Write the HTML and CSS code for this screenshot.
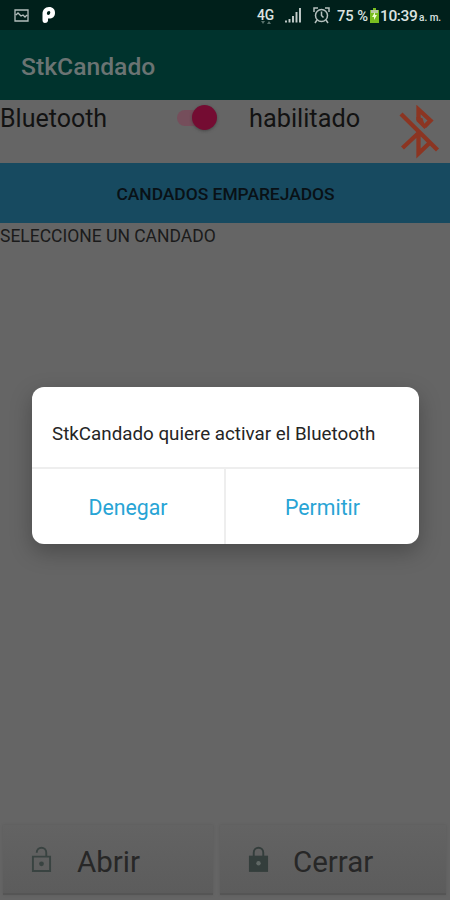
FILE: index.html
```html
<!DOCTYPE html>
<html lang="es">
<head>
<meta charset="utf-8">
<title>StkCandado</title>
<link rel="stylesheet" href="styles.css">
</head>
<body>
<div class="screen">
  <header class="status">
    <svg class="photo" viewBox="0 0 15 13"><path d="M1 1h13v11H1zM2 6l2-2 3 3 2-1 2 2 2-2" fill="none" stroke="#b4bfbd" stroke-width="1.300"/></svg>
    <svg class="app" viewBox="0 0 14 17"><path fill-rule="evenodd" d="M7 0C11 0 13 2.500 13 6C13 10 10 12 6 11.500V14Q5.500 16 3 16Q.5 16 .5 13V7C.5 3 3 0 7 0ZM7 4C5 4 4 7 6 8C8 8.500 9.500 4 7 4Z" fill="#fff"/></svg>
    <div class="network"><span>4G</span><svg viewBox="0 0 10 4"><path d="M0 0h4L2 3zM6 3l2-3 2 3z" fill="#58716b"/></svg></div>
    <svg class="signal" viewBox="0 0 17 15"><path d="M1 12.500v2M4.500 11v3.500M8 8v6.500M11.500 4v10.500M15 0v14.500" stroke="#c5cecc" stroke-width="1.900"/></svg>
    <svg class="alarm" viewBox="0 0 17 17"><g fill="none" stroke="#b5c0be" stroke-width="1.500"><circle cx="8.500" cy="8.500" r="6"/><path d="M8.500 4.500v4l2 2M1 5V1h4M12 1h4v4M4 13l-2 3M13 13l2 3"/></g></svg>
    <span class="percent">75 %</span>
    <svg class="battery" viewBox="0 0 9 15"><path d="M3 0h3v2h3v13H0V2h3z" fill="#79bd20"/><path d="M1 2h7v3H1z" fill="#b7c9a0"/><path d="M5 4L2 9h2v3l3-5H5z" fill="#efffcf"/></svg>
    <span class="clock">10:39</span><span class="ampm">a. m.</span>
  </header>
  <div class="toolbar"><h1>StkCandado</h1></div>
  <div class="bluetooth">
    <span class="label">Bluetooth</span>
    <span class="switch"><i></i></span>
    <span class="state">habilitado</span>
    <svg class="bt" viewBox="0 0 42 54"><g fill="none" stroke="#8c3522" stroke-width="4.300"><path d="M3 9L39.500 45M4.500 43L20 28.500M20.500 28V48.500L31.500 38M20.500 15V4.500L32.500 15.500 26.500 21.500"/></g><path d="M18.400 12v4l8 8 4-4-4-1-2-6z" fill="#8c3522"/></svg>
  </div>
  <div class="paired"><span>CANDADOS EMPAREJADOS</span></div>
  <main><span class="select">SELECCIONE UN CANDADO</span></main>
  <footer>
    <div class="action"><svg viewBox="0 0 22 28"><path d="M2 11h18v15H2zM6 7C6 0 16 0 16 7v4" fill="none" stroke="#394341" stroke-width="2"/><circle cx="11" cy="18.500" r="2.500" fill="#394341"/></svg><span class="open">Abrir</span></div>
    <div class="action"><svg viewBox="0 0 22 28"><path d="M6 11V7C6 0 16 0 16 7v4" fill="none" stroke="#343e3c" stroke-width="2"/><path d="M1 10h20v17H1z" fill="#343e3c"/><circle cx="11" cy="18" r="2.300" fill="#606865"/></svg><span class="close">Cerrar</span></div>
  </footer>
  <section class="dialog">
    <p><span>StkCandado quiere activar el Bluetooth</span></p>
    <div class="choices"><div class="choice"><span class="deny">Denegar</span></div><div class="choice"><span class="allow">Permitir</span></div></div>
  </section>
</div>
</body>
</html>
```
FILE: styles.css
```css
* { box-sizing: border-box; }
body { margin: 0; font-family: Roboto, sans-serif; }
svg { display: block; flex: none; }
span { white-space: nowrap; }
.screen { position: relative; width: 450px; height: 900px; display: flex; flex-direction: column; overflow: hidden; background: #656565; }
.status { height: 30px; flex: none; display: flex; align-items: center; background: #00201b; color: #dce3e1; }
.photo { width: 15px; height: 13px; margin-left: 14px; }
.app { width: 14px; height: 17px; margin-left: 13px; }
.network { width: 18px; margin-left: 201px; padding-top: 3px; font-size: 13.8px; line-height: 12px; font-weight: 500; }
.network svg { width: 10px; height: 4px; margin-left: 4px; }
.signal { width: 17px; height: 15px; margin-left: 10px; }
.alarm { width: 17px; height: 17px; margin-left: 11px; }
.percent { width: 32px; margin-left: 7px; padding-top: 2px; font-size: 14.7px; font-weight: 500; }
.battery { width: 9px; height: 15px; margin-left: 1px; }
.clock { width: 39px; margin-left: 1px; padding-top: 2px; font-size: 15.5px; font-weight: 500; letter-spacing: -.4px; }
.ampm { padding-top: 5px; font-size: 10px; font-weight: 500; }
.toolbar { height: 70px; flex: none; padding: 21px 21px 0; background: #00332d; }
h1 { margin: 0; color: #6b7473; font-size: 24.7px; font-weight: 500; line-height: 32px; }
.bluetooth { height: 63px; flex: none; display: flex; align-items: flex-start; color: #121212; font-size: 25px; line-height: 30px; }
.label { width: 177px; padding-top: 4px; }
.switch { width: 36px; height: 16px; margin-top: 10px; border-radius: 8px; background: #754e5b; }
.switch i { display: block; width: 25px; height: 25px; margin: -5px 0 0 15px; border-radius: 50%; background: #740c32; box-shadow: 0 1px 3px #3339; }
.state { width: 149px; padding-top: 4px; margin-left: 36px; font-size: 25.3px; }
.bt { width: 42px; height: 54px; margin-top: 5px; }
.paired { height: 60px; flex: none; display: flex; align-items: center; justify-content: center; padding: 1px 0 0 1px; background: #174a60; color: #091116; font-size: 17.4px; font-weight: 500; }
main { flex: 1; color: #1b1b1b; font-size: 17.5px; line-height: 24px; }
.select { display: block; padding-top: 1px; }
footer { height: 80px; flex: none; display: grid; grid-template-columns: 210px 226px; gap: 7px; padding: 5px 3px 5px; }
.action { display: flex; align-items: center; padding-left: 28px; background: linear-gradient(#636363, #5c5c5c); border-bottom: 2px solid #555; box-shadow: 0 0 2px #5559; color: #272727; font-size: 29.5px; }
.action svg { width: 21px; height: 27px; }
.action span { padding-top: 5px; margin-left: 24px; }
.action .open { margin-left: 25px; }
.dialog { position: absolute; left: 32px; top: 387px; width: 387px; height: 157px; border-radius: 12px; background: #fff; box-shadow: 0 8px 22px #0004; }
.dialog p { height: 82px; margin: 0; padding: 13px 20px 0; display: flex; align-items: center; border-bottom: 2px solid #eee; color: #252525; font-size: 18.8px; }
.choices { height: 75px; display: grid; grid-template-columns: 194px 193px; color: #28a4d5; font-size: 21.3px; }
.choice { display: flex; align-items: center; justify-content: center; padding-top: 1px; }
.choice:first-child { border-right: 2px solid #eee; }
```
